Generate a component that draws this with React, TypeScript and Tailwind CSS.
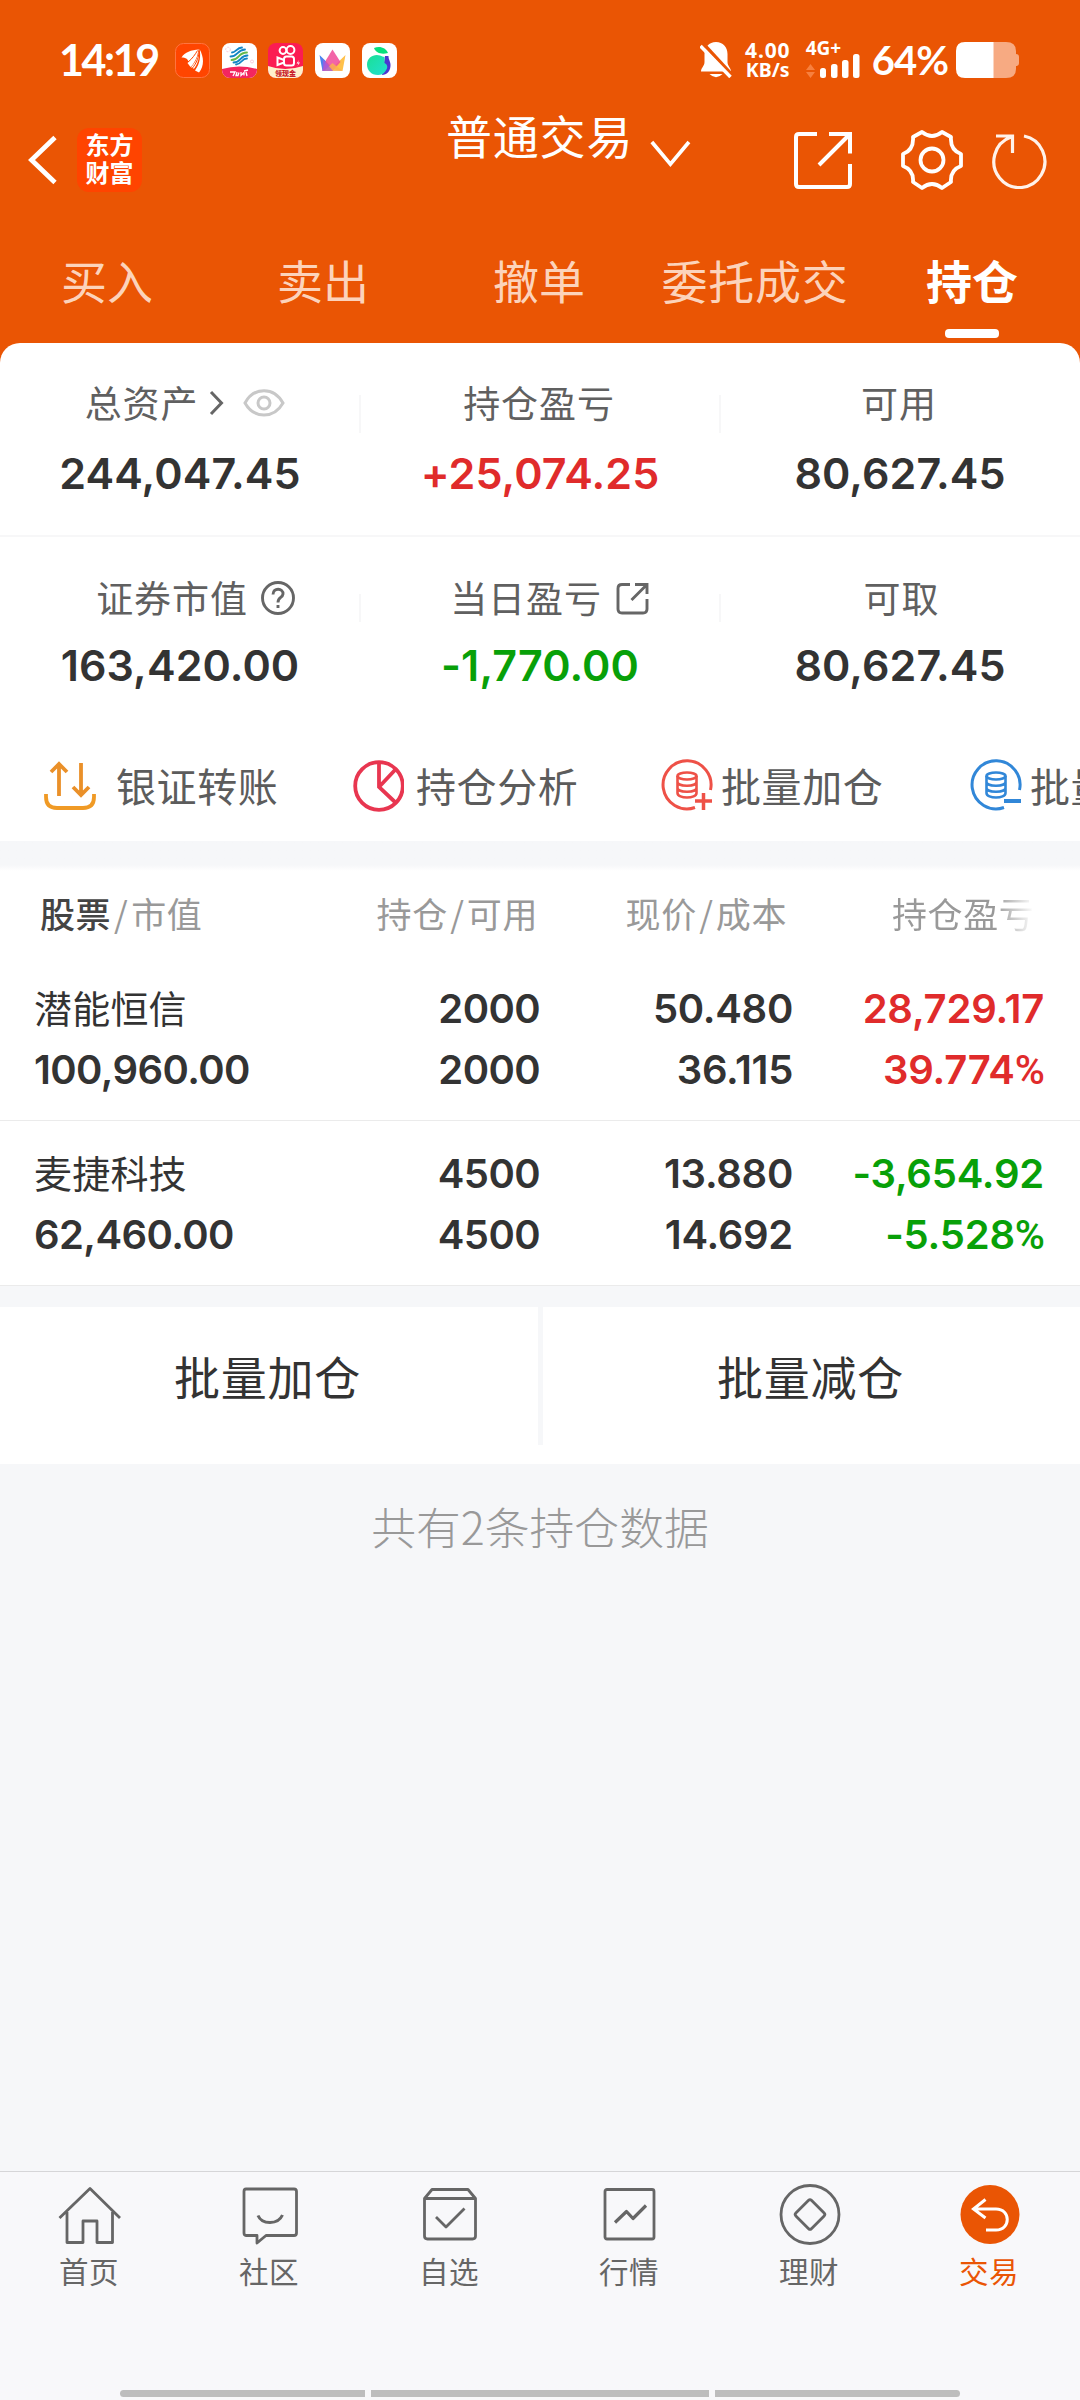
import React from 'react';

const CJK = "font-['Noto_Sans_CJK_SC',sans-serif]";
const NUM = "font-['Inter',sans-serif]";

function StatusApps() {
  return (
    <div className="ml-[16px] flex gap-[11.7px]">
      <svg width="35" height="35" viewBox="0 0 35 35">
        <rect x=".5" y=".5" width="34" height="34" rx="8" fill="#ff4500" stroke="#ff7440" />
        <path d="M6.500 14.500C10 9 16 7 24 6.500C22 11 18 16 14 19L12 16C10 14.700 8.500 14.500 6.500 14.500Z" fill="#fff" />
        <path d="M23 6.500C23.500 13 19 21 15.500 24L12.500 20C16.500 17 20.500 12 23 6.500Z" fill="#fff" />
        <path d="M24.500 6C29 14 29.500 23 24 29.500L20 27.500C25 20.500 26 13 24.500 6Z" fill="#fff" />
        <path d="M23.800 7C25 14 22.500 21.500 19 25.800L16 24.200C20.500 20 23.500 13 23.800 7Z" fill="#fff" />
        <path d="M13 19C17 16 20.500 11 22.500 7.500M17 25.500C21.500 20.500 24.500 13 23.800 7.500" stroke="#ff4500" strokeWidth="1" fill="none" />
      </svg>
      <svg width="35" height="35" viewBox="0 0 35 35">
        <clipPath id="mobileClip"><rect width="35" height="35" rx="8" /></clipPath>
        <g clipPath="url(#mobileClip)">
          <rect width="35" height="35" fill="#fff" />
          <path d="M0 26Q17 21 35 26V35H0Z" fill="#f32660" />
          <g fill="none" strokeWidth="1.800" strokeLinecap="round">
            <path d="M10 9.500C14 9.500 14.500 4.500 20 4.500M8.500 13.500C16 13.500 14.500 7 23 6.500" stroke="#1386c5" />
            <path d="M9.500 17C18 17 15.500 9.500 25 9.500" stroke="#63b94a" />
            <path d="M11.500 19.500C20 19 17.500 12.500 25.500 12.500" stroke="#1386c5" />
            <path d="M14 21.500C20.500 21 19 15.500 25 15.500" stroke="#1386c5" />
          </g>
          <path d="M8 29H13L11 33M15 29L14 32.500H16L17 29.500M19 29V32.500L22 29.500V32.500M22 28L26 27M24 29L25 33" stroke="#fff" strokeWidth="1.300" fill="none" />
          <circle cx="6" cy="6.500" r="2.300" stroke="#f7bfd0" strokeWidth=".8" fill="none" strokeDasharray="2 1" />
          <circle cx="30" cy="18.500" r="1.500" stroke="#f7bfd0" strokeWidth=".8" fill="none" />
        </g>
      </svg>
      <svg width="35" height="35" viewBox="0 0 35 35">
        <clipPath id="videoClip"><rect width="35" height="35" rx="8" /></clipPath>
        <g clipPath="url(#videoClip)">
          <rect width="35" height="35" fill="#fb1c52" />
          <path d="M0 23Q17 29 35 23V35H0Z" fill="#fff0cb" />
          <g fill="none" stroke="#fff" strokeWidth="2">
            <circle cx="15" cy="7.500" r="3.400" /><circle cx="22.500" cy="7" r="3.900" />
            <rect x="16" y="13.500" width="10" height="9" rx="2.500" />
            <path d="M16 17L9.500 14.500V22L16 19.500" />
          </g>
          <path d="M31 17L28.500 20.500H30.500L29.500 23L32 19.500H30Z" fill="#fff" />
          <text x="17.500" y="33.300" textAnchor="middle" fontSize="7" fontWeight="900" fontFamily="Noto Sans CJK SC" fill="#c81c2c">领现金</text>
        </g>
      </svg>
      <svg width="35" height="35" viewBox="0 0 35 35">
        <rect width="35" height="35" rx="8" fill="#fff" />
        <path d="M4.500 12L19 26L7.500 28Z" fill="#4a83f0" />
        <path d="M30.500 12L16 26L27.500 28Z" fill="#ffc14a" />
        <path d="M17.500 6.500L25.500 19L17.500 28H7.500L11 17Z" fill="#f04e9c" opacity=".88" />
        <path d="M17.500 20L27.500 28H9Z" fill="#fbb050" opacity=".85" />
        <path d="M8 16L18 28H7.500Z" fill="#a05be0" opacity=".75" />
      </svg>
      <svg width="35" height="35" viewBox="0 0 35 35">
        <defs><linearGradient id="fruit" x1="0" y1="0" x2="1" y2="1"><stop stopColor="#1ae094" /><stop offset="1" stopColor="#22dfd2" /></linearGradient></defs>
        <rect width="35" height="35" rx="8" fill="#fff" />
        <path d="M23 13H26.500C26.500 17 29 19 28.500 23C28 28.500 25 31.500 20 32Z" fill="#4b36d0" />
        <path d="M22.500 14V20C26 21.500 26 25 23.500 28C21.500 31 19 32 16 32C9 32 5 27 5 21.500C5 14.500 12 10.500 18 12.500C20 13.200 21 14 22.500 14Z" fill="url(#fruit)" />
        <path d="M12 5C18 2.500 24 5 26 10C20 11.500 14 10.500 12 5Z" fill="#08e07c" />
      </svg>
    </div>
  );
}

function StatusBar() {
  return (
    <div className="flex h-[120px] items-center pl-[59px] text-white">
      <div className="w-[100px] whitespace-nowrap font-['Lato',sans-serif] text-[43px] font-bold leading-[50px] tracking-[-2.4px]">14:19</div>
      <StatusApps />
      <svg className="ml-[303px]" width="32" height="36" viewBox="0 0 32 36" fill="#fff">
        <path d="M16 0C23 0 27.500 5 27.500 12V20C27.500 24 31 26 31 29.500H1C1 26 4.500 24 4.500 20V12C4.500 5 9 0 16 0Z" />
        <path d="M9.500 32H22.500Q16 38.500 9.500 32Z" />
        <path d="M3.500 2L33 34" stroke="#ea5504" strokeWidth="3.500" />
        <path d="M.5 4L30.500 35" stroke="#fff" strokeWidth="3.500" />
      </svg>
      <div className="ml-[12px] flex w-[48px] flex-col items-center whitespace-nowrap font-['Noto_Sans',sans-serif] text-[21px] font-bold leading-[20px]">
        <span className="tracking-[0.9px]">4.00</span>
        <span className="text-[19.5px]">KB/s</span>
      </div>
      <div className="ml-[14px] flex w-[56px] flex-col">
        <span className="h-[14px] font-['Noto_Sans',sans-serif] text-[19px] font-bold leading-[13px]">4G+</span>
        <svg className="-mt-[2px]" width="56" height="24" viewBox="0 0 56 24">
          <path d="M4.500 10L9 16H0ZM4.500 24L9 18H0Z" fill="#f7803f" />
          <g fill="#fff">
            <rect x="14" y="14" width="6" height="10" rx="2.500" />
            <rect x="25" y="10" width="6.500" height="14" rx="2.500" />
            <rect x="36" y="6" width="6.500" height="18" rx="2.500" />
            <rect x="47" y="0" width="6.500" height="24" rx="2.500" />
          </g>
        </svg>
      </div>
      <div className="ml-[10px] w-[84px] whitespace-nowrap font-['Lato',sans-serif] text-[40px] font-bold leading-[44px] tracking-[-1px]">64%</div>
      <svg width="63" height="36" viewBox="0 0 63 36">
        <path d="M37 0H50Q60 0 60 9V12Q63 12 63 15V21Q63 24 60 24V27Q60 36 50 36H37Z" fill="#f7aa82" />
        <path d="M37.500 0H9Q0 0 0 9V27Q0 36 9 36H37.500Z" fill="#fff" />
      </svg>
    </div>
  );
}

function Toolbar() {
  return (
    <div className="flex h-[80px] items-center pl-[28px] text-white">
      <svg width="30" height="50" viewBox="0 0 30 50" fill="none" stroke="#fff" strokeWidth="4.800">
        <path d="M27 2.500L3.500 25L27 47.500" />
      </svg>
      <div className={`${CJK} ml-[19px] flex h-[64px] w-[65px] flex-col items-center rounded-[12px] bg-[#ff4400] pt-[2px] text-[24px] font-bold leading-[28px]`}>
        <span>东方</span>
        <span>财富</span>
      </div>
      <div className="ml-[304px] flex h-[80px] w-[245px]">
        <span className={`${CJK} -mt-[18px] whitespace-nowrap text-[46px] leading-[64px] tracking-[0.8px]`}>普通交易</span>
        <svg className="ml-[17px] mt-[19px]" width="44" height="30" viewBox="0 0 44 30" fill="none" stroke="#fff" strokeWidth="4">
          <path d="M2 2L22 26L42 2" />
        </svg>
      </div>
      <svg className="ml-[102px]" width="60" height="60" viewBox="0 0 60 60" fill="none" stroke="#fff" strokeWidth="4">
        <path d="M24 4H6Q3 4 3 7V54Q3 57 6 57H54Q57 57 57 54V34M36 4H57V23.500M57 4L26 35" />
      </svg>
      <svg className="ml-[48px]" width="62" height="60" viewBox="0 0 62 60" fill="none" stroke="#fff" strokeWidth="3.800" strokeLinejoin="round">
        <path d="M21 2Q31 10 41 2L50 7Q49 20 60 24V36Q49 40 50 52L41 58Q31 50 21 58L12 52Q13 40 2 36V24Q13 20 12 7Z" />
        <circle cx="31" cy="30" r="11.500" />
      </svg>
      <svg className="ml-[28px]" width="56" height="58" viewBox="0 0 56 58" fill="none" stroke="#fff2ea" strokeWidth="3.200">
        <path d="M33 5A25.500 26 0 1 1 20 6M5 5H21.500V22" />
      </svg>
    </div>
  );
}

const tabs = ['买入', '卖出', '撤单', '委托成交', '持仓'];

function Tabs() {
  return (
    <div className={`${CJK} flex h-[143px] text-[46px] leading-[64px]`}>
      {tabs.map((t, i) => (
        <div key={t} className={i === 4 ? 'flex w-[216px] flex-col items-center pt-[47px] font-bold text-white' : 'flex w-[214px] mr-[2px] flex-col items-center pt-[47px] text-[#fcd3bb]'}>
          <span className={i === 3 ? 'tracking-[0.7px]' : ''}>{t}</span>
          {i === 4 && <i className="mt-[18px] h-[9px] w-[54px] rounded-[4px] bg-white" />}
        </div>
      ))}
    </div>
  );
}

function Stat({ label, value, color, gap, shift, children }: { label: string; value: string; color: string; gap: string; shift: string; children?: React.ReactNode }) {
  return (
    <div className="flex w-[360px] flex-col items-center">
      <div className={`${CJK} flex h-[52px] items-center whitespace-nowrap text-[37px] leading-[52px] tracking-[0.9px] text-[#606060] ${shift}`}>
        {label}
        {children}
      </div>
      <div className={`${NUM} text-[43px] font-semibold leading-[52px] tracking-[0.1px] ${gap} ${color}`}>{value}</div>
    </div>
  );
}

function Divider({ cls }: { cls: string }) {
  return <i className={`-mx-px w-[2px] shrink-0 bg-[#f7f7f8] ${cls}`} />;
}

function Coins({ color, minus }: { color: string; minus?: boolean }) {
  return (
    <svg width="52" height="52" viewBox="0 0 52 52" fill="none" stroke={color} strokeWidth="3">
      <path d="M34 48.500A24 24 0 1 1 49.500 31" />
      <g strokeWidth="2.600">
        <ellipse cx="26" cy="17" rx="9.500" ry="3.500" />
        <path d="M16.500 17V34C16.500 40 35.500 40 35.500 34V17M16.500 23C16.500 28 35.500 28 35.500 23M16.500 29C16.500 34 35.500 34 35.500 29" />
      </g>
      {minus ? <path d="M34 42H51" strokeWidth="4" /> : <path d="M34 42H51M42.500 34V51" strokeWidth="3.500" />}
    </svg>
  );
}

function Shortcuts() {
  const item = 'flex h-[60px] w-[309px] shrink-0 items-center';
  return (
    <div className={`${CJK} flex h-[149px] overflow-hidden whitespace-nowrap pl-[43px] pt-[63px] text-[40px] leading-[60px] tracking-[0.6px] text-[#5c5c5c]`}>
      <div className={item}>
        <svg className="mt-[2px]" width="54" height="52" viewBox="0 0 54 52" fill="none" stroke="#f09a25" strokeWidth="3.800">
          <path d="M3 34V37Q3 48 14 48H40Q51 48 51 37V34" />
          <path d="M16 36V5M8 12L16 4L24 12" stroke="#ea9029" />
          <path d="M38 3V34M30 27L38 35L46 27" stroke="#ea9029" />
        </svg>
        <span className="-mt-[1px] ml-[19px]">银证转账</span>
      </div>
      <div className={item}>
        <svg className="mt-[2px]" width="52" height="52" viewBox="0 0 52 52" fill="none" stroke="#e83650" strokeWidth="3.800">
          <circle cx="27" cy="26" r="23.800" />
          <path d="M27 2V27L44 43M27 27L43 10" />
        </svg>
        <span className="-mt-[1px] ml-[12px]">持仓分析</span>
      </div>
      <div className={item}>
        <Coins color="#ee5147" />
        <span className="-mt-[1px] ml-[8px]">批量加仓</span>
      </div>
      <div className={item}>
        <Coins color="#3187d8" minus />
        <span className="-mt-[1px] ml-[8px]">批量减仓</span>
      </div>
    </div>
  );
}

const cols = 'grid grid-cols-[266px_239px_253px_251px] pl-[35px]';

const holdings = [
  { name: '潜能恒信', mv: '100,960.00', a: '2000', b: '2000', p: '50.480', c: '36.115', g: '28,729.17', r: '39.774', color: 'text-[#e02b2b]' },
  { name: '麦捷科技', mv: '62,460.00', a: '4500', b: '4500', p: '13.880', c: '14.692', g: '-3,654.92', r: '-5.528', color: 'text-[#08a008]' },
];

function Holdings() {
  return (
    <div className="bg-white">
      <div className={`${CJK} ${cols} h-[85px] whitespace-nowrap pt-[16px] text-[35px] leading-[52px] tracking-[0.6px] text-[#999]`}>
        <div className="flex pl-[5px]">
          <span className="font-medium text-[#444]">股票</span>
          <span className="w-[20px] text-center">/</span>
          <span>市值</span>
        </div>
        <div className="flex justify-end pr-[2px]">持仓<span className="w-[19px] text-center">/</span>可用</div>
        <div className="flex justify-end pr-[6px]">现价<span className="w-[19px] text-center">/</span>成本</div>
        <div className="pl-[99px]">
          <span className="bg-linear-to-r from-[#999] from-[72%] to-white bg-clip-text text-transparent">持仓盈亏</span>
        </div>
      </div>
      {holdings.map((h) => (
        <div key={h.name} className={`${cols} ${NUM} border-b border-[#ebebeb] pb-[20px] pt-[22px] text-[40px] font-semibold leading-[61px] tracking-[-0.6px] text-[#333]`}>
          <div className="-ml-px">
            <div className={`${CJK} h-[61px] text-[38px] font-normal leading-[58px] tracking-[0.2px]`}>{h.name}</div>
            <div>{h.mv}</div>
          </div>
          <div className="text-right"><div>{h.a}</div><div>{h.b}</div></div>
          <div className="text-right tracking-[-0.3px]"><div>{h.p}</div><div>{h.c}</div></div>
          <div className={`text-right tracking-[-0.2px] ${h.color}`}>
            <div>{h.g}</div>
            <div className="h-[61px]">{h.r}<span className="font-['Roboto',sans-serif] text-[41px] font-medium tracking-[-1px]">%</span></div>
          </div>
        </div>
      ))}
    </div>
  );
}

function NavIcon({ i }: { i: number }) {
  const p = { width: 64, height: 64, viewBox: '0 0 64 64', fill: 'none', stroke: '#666', strokeWidth: 2.8, strokeLinejoin: 'round' as const };
  switch (i) {
    case 0:
      return <svg {...p}><path d="M1.500 34L32 4.500L62 34M9 28V58.500H25V37H39V58.500H54.500V28" /></svg>;
    case 1:
      return <svg {...p}><path d="M8 5H56Q58.500 5 58.500 7.500V49Q58.500 51.500 56 51.500H28L19 59V51.500H8Q6 51.500 6 49V7.500Q6 5 8 5Z" /><path d="M20 31.500C24 41 40 41 44.500 31" strokeWidth="3" /></svg>;
    case 2:
      return <svg {...p}><path d="M6.500 14.500L14 5.500H50L57.500 14.500V52Q57.500 55 54.500 55H9.500Q6.500 55 6.500 52ZM6.500 14.500H57.500M18 33L28 43L46.500 24.500" /></svg>;
    case 3:
      return <svg {...p}><rect x="7" y="5.500" width="49" height="49.500" rx="2" /><path d="M17 38.500L28.500 27.500L35 34.500L48 21.500" strokeWidth="3.200" /></svg>;
    case 4:
      return <svg {...p}><circle cx="32" cy="30.500" r="29" /><rect x="21" y="19.500" width="22" height="22" rx="2" transform="rotate(45 32 30.500)" /></svg>;
    default:
      return (
        <svg {...p}>
          <circle cx="32" cy="30.500" r="29.500" fill="#ea5504" stroke="none" />
          <path d="M27.500 15.500L15.500 25L27.500 34M15.500 25H38C53 25 53 46 38 46H28" stroke="#fff" strokeWidth="3" strokeLinejoin="miter" />
        </svg>
      );
  }
}

const nav = ['首页', '社区', '自选', '行情', '理财', '交易'];

export default function App() {
  const dark = 'text-[#333]';
  return (
    <div className="flex h-[2400px] w-[1080px] flex-col overflow-hidden bg-[#f6f7f9]">
      <div className="bg-[#ea5504]">
        <StatusBar />
        <Toolbar />
        <Tabs />
        <div className="h-[498px] rounded-t-[20px] bg-white">
          <div className="flex h-[194px] border-b-2 border-[#f7f7f8] pt-[33px]">
            <Stat label="总资产" value="244,047.45" color={dark} gap="mt-[19px]" shift="ml-[10px]">
              <svg className="ml-[11px] mt-[2px]" width="15" height="26" viewBox="0 0 15 26" fill="none" stroke="#666" strokeWidth="3"><path d="M2 2L12.500 13L2 24" /></svg>
              <svg className="ml-[19px] mt-[2px]" width="42" height="30" viewBox="0 0 42 30" fill="none" stroke="#c8c8c8" strokeWidth="3"><path d="M2 15C11 -1.500 31 -1.500 40 15C31 31 11 31 2 15Z" /><circle cx="21" cy="15" r="6" /></svg>
            </Stat>
            <Divider cls="mt-[19px] h-[38px]" />
            <Stat label="持仓盈亏" value="+25,074.25" color="text-[#e02b2b]" gap="mt-[19px]" shift="-ml-[2px]" />
            <Divider cls="mt-[19px] h-[38px]" />
            <Stat label="可用" value="80,627.45" color={dark} gap="mt-[19px]" shift="-ml-[2px]" />
          </div>
          <div className="flex h-[155px] pt-[34px]">
            <Stat label="证券市值" value="163,420.00" color={dark} gap="mt-[16px]" shift="ml-[32px]">
              <svg className="ml-[12px] mt-[2px]" width="36" height="36" viewBox="0 0 36 36" fill="none" stroke="#666" strokeWidth="2.900"><circle cx="18" cy="18" r="15.500" /><path d="M13 14.500C13 7 23.500 8 23 14C22.500 18 18 17 18 22.500M18 25V28" /></svg>
            </Stat>
            <Divider cls="mt-[23px] h-[28px]" />
            <Stat label="当日盈亏" value="-1,770.00" color="text-[#08a008]" gap="mt-[16px]" shift="ml-[21px]">
              <svg className="ml-[13px] mt-[3px]" width="36" height="36" viewBox="0 0 36 36" fill="none" stroke="#666" strokeWidth="2.900"><path d="M15 3.500H7Q3 3.500 3 7.500V28Q3 32 7 32H28Q32 32 32 28V18M20 3.500H32V13M32 3.500L16.500 19" /></svg>
            </Stat>
            <Divider cls="mt-[23px] h-[28px]" />
            <Stat label="可取" value="80,627.45" color={dark} gap="mt-[16px]" shift="ml-[3px]" />
          </div>
          <Shortcuts />
        </div>
      </div>
      <div className="h-[30px] shrink-0 bg-linear-to-b from-[#f6f7f9] from-80% to-white" />
      <Holdings />
      <div className="h-[21px] shrink-0" />
      <div className={`${CJK} flex h-[157px] shrink-0 bg-white text-center text-[46px] leading-[136px] tracking-[0.8px] text-[#333]`}>
        <div className="mr-[3px] w-[535px]">批量加仓</div>
        <i className="h-[138px] w-[5px] bg-[#f6f7f9]" />
        <div className="w-[535px]">批量减仓</div>
      </div>
      <div className={`${CJK} pt-[30px] text-center text-[44.800px] font-light leading-[64px] text-[#999]`}>共有2条持仓数据</div>
      <div className="mt-auto flex h-[229px] shrink-0 flex-col border-t border-[#d6d6d8] bg-[#f8f8fa]">
        <div className={`${CJK} flex text-[29.5px] leading-[40px] tracking-[0.5px] text-[#666]`}>
          {nav.map((n, i) => (
            <div key={n} className={i === 5 ? 'flex w-[180px] flex-col items-center pt-[12px] text-[#ea5504]' : 'flex w-[180px] flex-col items-center pt-[12px]'}>
              <NavIcon i={i} />
              <span className="mr-[2px] mt-[2px]">{n}</span>
            </div>
          ))}
        </div>
        <div className="mb-[3px] mt-auto flex justify-center gap-[6px]">
          <i className="h-[7px] w-[245px] rounded-l-full bg-[#bdbdbd]" />
          <i className="h-[7px] w-[338px] bg-[#bdbdbd]" />
          <i className="h-[7px] w-[245px] rounded-r-full bg-[#bdbdbd]" />
        </div>
      </div>
    </div>
  );
}
